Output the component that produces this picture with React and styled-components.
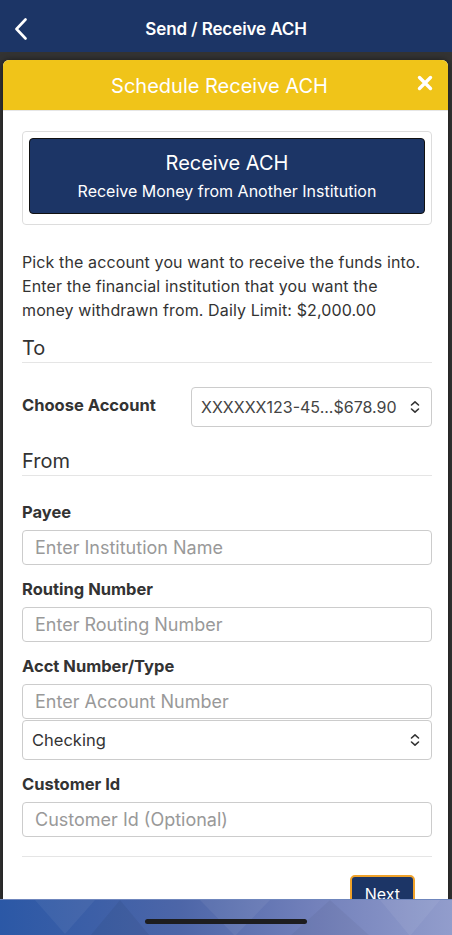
import styled, { createGlobalStyle } from "styled-components";

const GlobalStyle = createGlobalStyle`
  html, body {
    margin: 0;
    padding: 0;
    background: #333;
  }
  * {
    box-sizing: border-box;
  }
`;

const Screen = styled.div`
  width: 452px;
  height: 935px;
  display: flex;
  flex-direction: column;
  overflow: hidden;
  font-family: Inter, "Liberation Sans", sans-serif;
  background: #333;
`;

const NavBar = styled.header`
  height: 52px;
  flex: none;
  display: flex;
  align-items: center;
  justify-content: center;
  position: relative;
  padding-top: 5px;
  background: #1c3566;
  color: #fff;
`;

const NavTitle = styled.h1`
  margin: 0;
  font-size: 17px;
  font-weight: 600;
  letter-spacing: -0.1px;
`;

const BackButton = styled.button`
  position: absolute;
  left: 10px;
  top: 16px;
  border: none;
  background: none;
  padding: 0;
  width: 22px;
  height: 26px;
  display: flex;
  align-items: center;
  justify-content: center;
`;

const Overlay = styled.div`
  flex: 1;
  min-height: 0;
  padding: 8px 4px 0 3px;
  overflow: hidden;
  background: #333;
`;

const Modal = styled.section`
  background: #fff;
  border-radius: 6px 6px 0 0;
  overflow: hidden;
  box-shadow: 0 0 6px rgba(0, 0, 0, 0.5);
`;

const ModalHeader = styled.div`
  height: 51px;
  background: #f0c419;
  display: flex;
  align-items: center;
  justify-content: center;
  position: relative;
  color: #fff;
  border-bottom: 1px solid #e6e6e6;
`;

const ModalTitle = styled.h2`
  margin: 2px 0 0 -12px;
  font-size: 20px;
  font-weight: 400;
`;

const CloseButton = styled.button`
  position: absolute;
  right: 15px;
  top: 15px;
  border: none;
  background: none;
  padding: 0;
  width: 16px;
  height: 16px;
`;

const ModalBody = styled.div`
  padding: 20px 16px 0 19px;
  color: #333;
`;

const ChoiceCard = styled.div`
  border: 1px solid #ddd;
  border-radius: 4px;
  padding: 6px 6px 10px;
`;

const ChoiceButton = styled.button`
  width: 100%;
  height: 76px;
  border: 1px solid #111;
  border-radius: 4px;
  background: #1c3566;
  color: #fff;
  display: flex;
  flex-direction: column;
  align-items: center;
  justify-content: center;
  gap: 6px;
  font-family: inherit;
`;

const ChoiceTitle = styled.span`
  font-size: 20px;
`;

const ChoiceSub = styled.span`
  font-size: 16px;
`;

const Intro = styled.p`
  margin: 25px 0 14px;
  font-size: 16px;
  line-height: 24px;
  letter-spacing: 0.12px;
  color: #333;
`;

const SectionTitle = styled.h3`
  margin: 0;
  font-size: 20px;
  font-weight: 400;
  line-height: 24px;
  padding-bottom: 2px;
  border-bottom: 1px solid #e5e5e5;
  color: #333;
`;

const AccountRow = styled.div`
  display: flex;
  align-items: center;
  justify-content: space-between;
  margin: 24px 0 22px;
`;

const Label = styled.label`
  display: block;
  font-size: 16.5px;
  font-weight: 700;
  line-height: 20px;
  color: #333;
  margin-bottom: ${({ inline }) => (inline ? "5px" : "8px")};
`;

const Fields = styled.div`
  display: flex;
  flex-direction: column;
  gap: 14px;
  margin-top: 26px;
`;

const Field = styled.div`
  display: flex;
  flex-direction: column;
`;

const Input = styled.input`
  width: 100%;
  height: 35px;
  border: 1px solid #ccc;
  border-radius: 4px;
  padding: 0 12px;
  font-family: inherit;
  font-size: 18px;
  color: #333;
  background: #fff;

  &::placeholder {
    color: #999;
  }
`;

const SelectBox = styled.div`
  width: ${({ width }) => width || "100%"};
  height: 40px;
  margin-top: ${({ attached }) => (attached ? "1px" : "0")};
  border: 1px solid #ccc;
  border-radius: 4px;
  padding: 0 10px 0 9px;
  display: flex;
  align-items: center;
  justify-content: space-between;
  font-size: ${({ compact }) => (compact ? "16px" : "16.5px")};
  color: ${({ compact }) => (compact ? "#444" : "#333")};
  background: #fff;
  white-space: nowrap;
`;

const Divider = styled.hr`
  border: none;
  border-top: 1px solid #e5e5e5;
  margin: 19px 0 18px;
`;

const Actions = styled.div`
  display: flex;
  justify-content: flex-end;
  padding-right: 17px;
  padding-bottom: 20px;
`;

const NextButton = styled.button`
  height: 38px;
  padding: 0 13px;
  border: 2px solid #f0a22a;
  border-radius: 5px;
  background: #1c3566;
  color: #fff;
  font-family: inherit;
  font-size: 16px;
`;

const Footer = styled.footer`
  height: 36px;
  flex: none;
  position: relative;
  display: flex;
  align-items: flex-end;
  justify-content: center;
  padding-bottom: 11px;
  background: linear-gradient(90deg, #2b58a6 0%, #4d66a8 40%, #7381bb 70%, #929dcc 100%);
  border-top: 1px solid #6f86bd;
`;

const Pattern = styled.svg`
  position: absolute;
  inset: 0;
`;

const HomeIndicator = styled.div`
  position: relative;
  width: 162px;
  height: 5px;
  border-radius: 3px;
  background: #1d1d1f;
`;

const Chevrons = () => (
  <svg width="12" height="14" viewBox="0 0 12 14" fill="none">
    <path d="M2.5 5 L6 1.8 L9.5 5" stroke="#333" strokeWidth="1.6" strokeLinecap="round" strokeLinejoin="round" />
    <path d="M2.5 9 L6 12.2 L9.5 9" stroke="#333" strokeWidth="1.6" strokeLinecap="round" strokeLinejoin="round" />
  </svg>
);

function App() {
  return (
    <Screen>
      <GlobalStyle />
      <NavBar>
        <BackButton aria-label="Back">
          <svg width="14" height="22" viewBox="0 0 14 22" fill="none">
            <path d="M11.5 1.5 L2.5 11 L11.5 20.5" stroke="#fff" strokeWidth="2.6" strokeLinecap="round" strokeLinejoin="round" />
          </svg>
        </BackButton>
        <NavTitle>Send / Receive ACH</NavTitle>
      </NavBar>
      <Overlay>
        <Modal>
          <ModalHeader>
            <ModalTitle>Schedule Receive ACH</ModalTitle>
            <CloseButton aria-label="Close">
              <svg width="16" height="16" viewBox="0 0 16 16">
                <path d="M2.5 2.5 L13.5 13.5 M13.5 2.5 L2.5 13.5" stroke="#fff" strokeWidth="3.4" strokeLinecap="round" />
              </svg>
            </CloseButton>
          </ModalHeader>
          <ModalBody>
            <ChoiceCard>
              <ChoiceButton>
                <ChoiceTitle>Receive ACH</ChoiceTitle>
                <ChoiceSub>Receive Money from Another Institution</ChoiceSub>
              </ChoiceButton>
            </ChoiceCard>

            <Intro>
              Pick the account you want to receive the funds into. Enter the
              financial institution that you want the money withdrawn from.
              Daily Limit: $2,000.00
            </Intro>

            <SectionTitle>To</SectionTitle>
            <AccountRow>
              <Label inline>Choose Account</Label>
              <SelectBox width="241px" compact>
                <span>XXXXXX123-45...$678.90</span>
                <Chevrons />
              </SelectBox>
            </AccountRow>

            <SectionTitle>From</SectionTitle>
            <Fields>
              <Field>
                <Label>Payee</Label>
                <Input placeholder="Enter Institution Name" />
              </Field>
              <Field>
                <Label>Routing Number</Label>
                <Input placeholder="Enter Routing Number" />
              </Field>
              <Field>
                <Label>Acct Number/Type</Label>
                <Input placeholder="Enter Account Number" />
                <SelectBox attached>
                  <span>Checking</span>
                  <Chevrons />
                </SelectBox>
              </Field>
              <Field>
                <Label>Customer Id</Label>
                <Input placeholder="Customer Id (Optional)" />
              </Field>
            </Fields>

            <Divider />
            <Actions>
              <NextButton>Next</NextButton>
            </Actions>
          </ModalBody>
        </Modal>
      </Overlay>
      <Footer>
        <Pattern width="452" height="36" viewBox="0 0 452 36" preserveAspectRatio="none">
          <polygon points="35,0 65,34 95,0" fill="#ffffff" opacity="0.05" />
          <polygon points="90,36 120,0 150,36" fill="#000" opacity="0.05" />
          <polygon points="200,0 235,36 270,0" fill="#ffffff" opacity="0.06" />
          <polygon points="290,36 330,0 370,36" fill="#000" opacity="0.04" />
          <polygon points="380,0 410,36 440,0" fill="#ffffff" opacity="0.06" />
        </Pattern>
        <HomeIndicator />
      </Footer>
    </Screen>
  );
}

export default App;
